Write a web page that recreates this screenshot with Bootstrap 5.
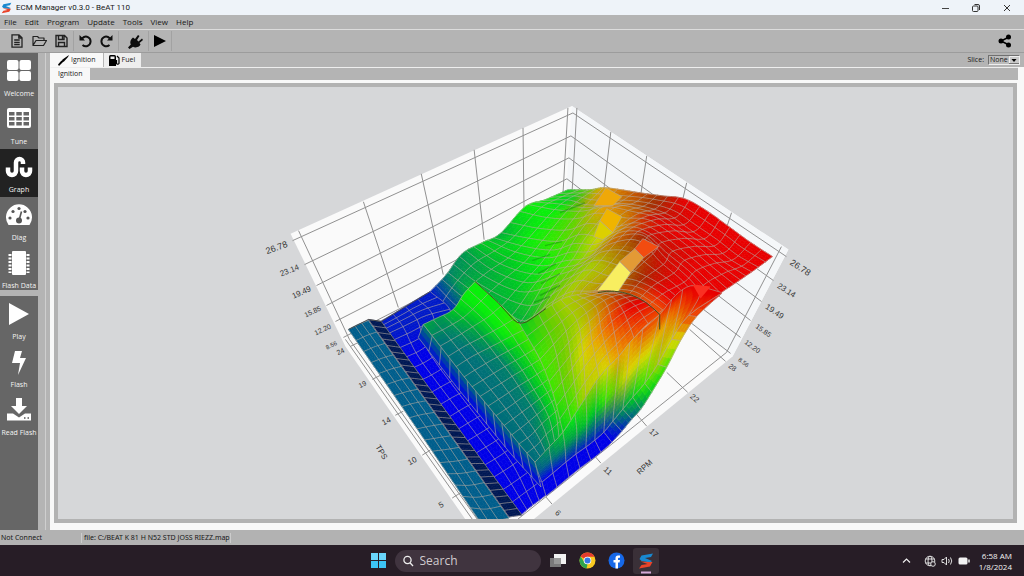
<!DOCTYPE html>
<html lang="en">
<head>
<meta charset="utf-8">
<meta name="viewport" content="width=device-width, initial-scale=1">
<title>ECM Manager v0.3.0 - BeAT 110</title>
<link rel="stylesheet" href="https://cdn.jsdelivr.net/npm/bootstrap@5.3.0/dist/css/bootstrap.min.css">
<style>
body{font-family:"Open Sans","Noto Sans",sans-serif;font-size:7px;line-height:10px;color:#181818;background:#b4b4b4}
button,input,select{font:inherit;color:inherit;border:0;background:none;padding:0;border-radius:0}
a{color:inherit;text-decoration:none}
svg{display:block;flex:none}
.titlebar{height:15px;background:#eef3f9;font-size:9px;padding:0 12px 0 1px}
.titlebar .caption-text{font-family:Roboto,"Open Sans",sans-serif;font-size:8px}
.win-ctl{gap:21px}
.menubar{height:15px;border-bottom:1px solid #dcdcdc;gap:8px;padding:0 4px;font-size:8px}
.toolbar{height:23px;border-bottom:1px solid #9c9c9c;padding:0 8px 0 10px}
.tool-group{gap:8px;padding-right:5px;margin-right:5px;border-right:1px solid #a2a2a2;height:20px}
.side{width:46px;border-right:1px solid #cfcfcf}
.side-list{width:38px;background:#666;color:#f4f4f4}
.side-list button{display:flex;flex-direction:column;align-items:center;justify-content:space-between;width:100%;height:48px;padding:6px 0 3px;font-size:7px;line-height:9px;white-space:nowrap}
.side-list button.active{background:#222}
.side-list.upper{height:237px}
.side-list.lower{margin-top:6px}
.work{background:#f8f8f8;margin-left:4px;min-width:0}
.tab-strip{background:#b4b4b4;height:14px;border-left:1px solid #f8f8f8}
.tab-strip.second{height:13px;border-top:1px solid #eee;margin-right:6px}
.tab-strip button{background:#f8f8f8;padding:0 7px;height:100%;display:flex;align-items:center;gap:2px}
.tab-strip button.dim{background:#eee;margin-left:1px;padding:0 6px 0 5px}
.slice-box{border:1px solid #707070;border-right-color:#eee;border-bottom-color:#eee;background:#bcbcbc;height:10px;width:32px}
.slice-box select{appearance:none;width:100%;height:8px;padding-left:1px;font-size:7px;line-height:8px;display:block}
.slice-box svg{right:0;top:0;pointer-events:none}
.plot-frame{margin:3px 7px 7px 4px;border:4px solid #b2b2b2;background:#d6d7d9;min-height:0}
.plot-frame svg{width:100%;height:100%}
.plot-frame text{font-family:"Liberation Sans",sans-serif;fill:#333;text-anchor:middle;dominant-baseline:central}
.status{height:15px;background:#b2b2b2;font-family:"Noto Sans",sans-serif;padding-left:1px}
.status .state{width:80px}
.status .file{border-left:1px solid #ccc;border-right:1px solid #ccc;padding-left:2px;white-space:nowrap}
.taskbar{height:31px;background:#271d26;color:#f3f3f3;padding-left:4px}
.search-pill{width:146px;height:22px;border-radius:11px;background:#40343f;padding-left:8px;gap:6px}
.search-pill input{width:110px;font-size:12px;line-height:18px;color:#ddd;outline:0}
.search-pill input::placeholder{color:#d0cbd0;opacity:1}
.app-open{width:26px;height:26px;border-radius:3px;background:#3a3038}
.tray{right:12px;gap:5px}
.clock{font-size:8px;line-height:11px}
</style>
</head>
<body class="d-flex flex-column vh-100 overflow-hidden">
<svg width="0" height="0" class="position-absolute" aria-hidden="true">
  <defs>
    <symbol id="brand" viewBox="0 0 16 16"><path fill="#1989d0" d="M1.500 6 3.500 2.500 15 .5 13 4 7 5l7 3-2 1.500L3.500 8z"/><path fill="#e9432a" d="M14.500 9 12 13.500 1 15.500 3.500 12l6-1L2.500 8.500l9 .5z"/></symbol>
  </defs>
</svg>

<header class="titlebar d-flex align-items-center flex-shrink-0">
  <svg width="11" height="12" class="me-1"><use href="#brand"/></svg>
  <span class="caption-text">ECM Manager v0.3.0 - BeAT 110</span>
  <div class="win-ctl d-flex ms-auto align-items-center">
    <button aria-label="Minimise"><svg width="10" height="10"><path d="M2 5.500h7" stroke="#444"/></svg></button>
    <button aria-label="Restore"><svg width="10" height="10" fill="none" stroke="#333"><rect x="1.500" y="3" width="5.500" height="5.500" rx="1"/><path d="M3.500 1.500H7q1.500 0 1.500 1.500v4"/></svg></button>
    <button aria-label="Close"><svg width="10" height="10" stroke="#333"><path d="M2 2l6 6M8 2l-6 6"/></svg></button>
  </div>
</header>

<nav class="menubar d-flex align-items-center flex-shrink-0">
  <a href="#">File</a><a href="#">Edit</a><a href="#">Program</a><a href="#">Update</a><a href="#">Tools</a><a href="#">View</a><a href="#">Help</a>
</nav>

<div class="toolbar d-flex align-items-center flex-shrink-0">
  <div class="tool-group d-flex align-items-center">
    <button aria-label="New"><svg width="14" height="14" fill="none" stroke="#222" stroke-width="1.300"><path d="M2 .8h7l3 3v9.400H2zM8.800.8V4H12M4.200 6h5.500M4.200 8.300h5.500M4.200 10.500h5.500"/></svg></button>
    <button aria-label="Open"><svg width="15" height="14" fill="none" stroke="#222" stroke-width="1.200" stroke-linejoin="round"><path d="M1 11.500V2.500h4.500l1.500 1.500h5v2.500M1 11.500 4 6.500h10.500l-3 5z"/></svg></button>
    <button aria-label="Save"><svg width="13" height="14" fill="none" stroke="#222" stroke-width="1.400"><path d="M1 1.500h8.500l2.500 2.500v8.500H1zM3.500 1.500v4h5.500v-4M3.500 12.500V8.500h6v4"/><path d="M7.500 2v3"/></svg></button>
  </div>
  <div class="tool-group d-flex align-items-center">
    <button aria-label="Undo"><svg width="13" height="14" fill="none" stroke="#111" stroke-width="2"><path d="M3 4.500C7 .5 12 3.500 11.500 8c-.5 4-5 5.500-8 3"/><path d="M.5 1v5.500H6z" fill="#111" stroke="none"/></svg></button>
    <button aria-label="Redo"><svg width="13" height="14" fill="none" stroke="#111" stroke-width="2"><path d="M10 4.500C6 .5 1 3.500 1.500 8c.5 4 5 5.500 8 3"/><path d="M12.500 1v5.500H7z" fill="#111" stroke="none"/></svg></button>
  </div>
  <div class="tool-group d-flex align-items-center ps-1">
    <button aria-label="Connect"><svg width="15" height="15" fill="#0c0c0c"><path d="M3.500 5 5 3.500l2 1.500L10 1l1.500 1-2.500 4 1.500 1.500L14 4.500l1 1.500-3.500 3 1 1.500-1 1.500c-3 2-5 1.500-6.500.8L1.500 15 0 13.500l2.800-3C2 9 2 7 3.500 5z"/></svg></button>
  </div>
  <div class="tool-group d-flex align-items-center">
    <button aria-label="Run"><svg width="12" height="14"><path d="M0 1v12l12-6z"/></svg></button>
  </div>
  <button aria-label="Share" class="ms-auto me-1"><svg width="14" height="14"><path d="M11 3 3 7l8 4" fill="none" stroke="#000" stroke-width="1.500"/><circle cx="10.500" cy="3" r="2.500"/><circle cx="3" cy="7" r="2.500"/><circle cx="10.500" cy="11" r="2.500"/></svg></button>
</div>

<main class="d-flex flex-grow-1" style="min-height:0">
  <aside class="side d-flex flex-column flex-shrink-0">
    <div class="side-list upper flex-shrink-0 overflow-hidden">
      <button><svg width="26" height="24" fill="#fff"><rect x="1" y="1" width="11.500" height="10" rx="2"/><rect x="13.500" y="1" width="11.500" height="10" rx="2"/><rect x="1" y="12" width="11.500" height="10" rx="2"/><rect x="13.500" y="12" width="11.500" height="10" rx="2"/></svg>Welcome</button>
      <button><svg width="26" height="24"><rect x="1" y="1" width="24" height="20" rx="2" fill="#fff"/><g fill="#666"><path d="M3 5h5.500v3.500H3zM10.300 5h5.500v3.500h-5.500zM17.500 5H23v3.500h-5.500zM3 10h5.500v3.500H3zM10.300 10h5.500v3.500h-5.500zM17.500 10H23v3.500h-5.500zM3 15h5.500v3.500H3zM10.300 15h5.500v3.500h-5.500zM17.500 15H23v3.500h-5.500z"/></g></svg>Tune</button>
      <button class="active"><svg width="28" height="25" fill="none" stroke="#fff" stroke-width="4.500"><path d="M3 12.500v3.500a4 4 0 0 0 8 0V7.500a3.500 3.500 0 0 1 7 0v1.500M17 12.500v3.500a4 4 0 0 0 8 0v-3.500"/></svg>Graph</button>
      <button><svg width="28" height="24"><path d="M3.500 22A13 13 0 1 1 24.500 22z" fill="#fff"/><g fill="#555"><circle cx="5" cy="15" r="1.600"/><circle cx="8" cy="8.500" r="1.600"/><circle cx="14" cy="5.500" r="1.600"/><circle cx="20" cy="8.500" r="1.600"/><circle cx="23" cy="15" r="1.600"/><circle cx="14" cy="17.500" r="3"/></g><path d="M14 17.500l2.500-9" stroke="#555" stroke-width="1.600"/></svg>Diag</button>
      <button><svg width="26" height="26"><rect x="6" y="0" width="14" height="24" rx="1" fill="#fff"/><path d="M4 3v19M22 3v19" stroke="#fff" stroke-width="3" stroke-dasharray="2 1.500"/></svg>Flash Data</button>
    </div>
    <div class="side-list lower flex-grow-1">
      <button><svg width="26" height="24"><path d="M3 1v22l20-11z" fill="#fff"/></svg>Play</button>
      <button><svg width="26" height="26"><path d="M9 1h7l-2 7h6L12 25l2-12H6z" fill="#fff"/></svg>Flash</button>
      <button><svg width="26" height="26" fill="#fff"><path d="M10 0h6v8h5l-8 8-8-8h5zM1 15.500h6l6 4 6-4h6v7H1z"/><path d="M18 20h1.500M21.500 20H23" stroke="#555" stroke-width="1.500"/></svg>Read Flash</button>
    </div>
  </aside>

  <section class="work d-flex flex-column flex-grow-1">
    <div class="tab-strip d-flex align-items-center flex-shrink-0">
      <button><svg width="11" height="11"><path d="M11 0 4.500 4.500 3 8l3-1.500L10 2zM3.500 5.500 0 9.500 1 11l4-4z"/></svg>Ignition</button>
      <button class="dim"><svg width="11" height="11"><path d="M0 11V1.500Q0 0 1.500 0h4Q7 0 7 1.500V11z"/><path d="M1.500 1.500h4V4h-4z" fill="#eee"/><path d="M7.500 5v3.500q1.500 1.500 2.500 0V3L8 1" fill="none" stroke="#000" stroke-width="1.200"/></svg>Fuel</button>
      <label for="slice" class="ms-auto me-1">Slice:</label>
      <div class="slice-box position-relative me-1"><select id="slice"><option>None</option></select><svg class="position-absolute" width="10" height="8"><path d="M0 0h10v8H0z" fill="#c9c9c9"/><path d="M.5 8V.5H10" fill="none" stroke="#eee"/><path d="M2.500 3h5l-2.500 3z"/><path d="M0 7.500h10" stroke="#777"/></svg></div>
    </div>
    <div class="tab-strip second d-flex flex-shrink-0"><button>Ignition</button></div>
    <div class="plot-frame flex-grow-1 overflow-hidden">
      <svg id="plot" viewBox="58 87 955 433" role="img" aria-label="Ignition map over RPM and TPS">
        <path d="M290 234 572 106 789 250 733 357 534 520H465L345 347z" fill="#fafafa"/>
        <path d="M572 106 789 250 733 357 564 225z" fill="#f5f7f9"/>
        <g id="axes" fill="none" stroke="#909090" stroke-width="1"></g>
        <g id="surface"></g>
        <g id="labels"></g>
      </svg>
    </div>
  </section>
</main>

<footer class="status d-flex align-items-center flex-shrink-0">
  <span class="state">Not Connect</span><span class="file">file: C:/BEAT K 81 H N52 STD JOSS RIEZZ.map</span>
</footer>

<div class="taskbar d-flex align-items-center justify-content-center flex-shrink-0 position-relative">
  <div class="d-flex align-items-center gap-2">
    <button aria-label="Start"><svg width="17" height="17" fill="#3cc4f5"><path d="M1 1h7v7H1zM9 1h7v7H9z" fill="#69d6fb"/><path d="M1 9h7v7H1zM9 9h7v7H9z"/></svg></button>
    <div class="search-pill d-flex align-items-center"><svg width="11" height="12" fill="none" stroke="#eee" stroke-width="1.300"><circle cx="4.500" cy="5" r="3.600"/><path d="M7 7.800 10 11"/></svg><input type="text" placeholder="Search" aria-label="Search"></div>
    <button aria-label="Task view"><svg width="18" height="16"><path d="M5 1h12v10H5z" fill="#f2f2f2"/><path d="M1 5h11v9H1z" fill="#888" fill-opacity=".85"/></svg></button>
    <button aria-label="Browser" class="ms-1"><svg width="17" height="17"><circle cx="8.500" cy="8.500" r="8" fill="#f9c922"/><path d="M8.500 8.500 1.600 4.500A8 8 0 0 1 15.500 4.700H8.500z" fill="#e33b2e"/><path d="M1.600 4.500 6 11l2.500 1.500L7.500 16.500A8 8 0 0 1 1.600 4.500z" fill="#2ea44f"/><circle cx="8.500" cy="8.500" r="3.800" fill="#fff"/><circle cx="8.500" cy="8.500" r="3" fill="#3578e5"/></svg></button>
    <button aria-label="Facebook" class="ms-1"><svg width="17" height="17"><circle cx="8.500" cy="8.500" r="8" fill="#1668e8"/><path d="M7.500 16.500V10.500h-2V8h2V6.300Q7.500 3.500 10 3.500h2v2.200h-1.200Q10 5.700 10 6.500V8h2l-.4 2.500H10v6z" fill="#fff"/></svg></button>
    <button aria-label="ECM Manager" class="app-open d-flex flex-column align-items-center justify-content-end"><svg width="16" height="22"><use href="#brand" width="16" height="16" y="1"/><path d="M3 20.500h10" stroke="#d5a9d8" stroke-width="2"/></svg></button>
  </div>
  <div class="tray position-absolute d-flex align-items-center">
    <svg width="9" height="9" class="me-2" fill="none" stroke="#eee" stroke-width="1.200"><path d="M1 6.500 4.500 3 8 6.500"/></svg>
    <svg width="12" height="12" fill="none" stroke="#ddd"><circle cx="6" cy="6" r="4.800"/><ellipse cx="6" cy="6" rx="2" ry="4.800"/><path d="M1.500 4h9M1.500 8H7"/><circle cx="9" cy="9" r="2.300" fill="#271d26"/></svg>
    <svg width="12" height="12" fill="none" stroke="#ddd"><path d="M1 4.500h2L5.500 2v8L3 7.500H1zM7.500 4q1.500 2 0 4M9.500 2.500q2.500 3.500 0 7"/></svg>
    <svg width="12" height="12"><rect x=".5" y="2.500" width="9" height="7" rx="1.500" fill="#f3f3f3"/><path d="M11 4.500v3" stroke="#eee" stroke-width="1.500"/></svg>
    <div class="clock text-end ms-1">6:58 AM<br>1/8/2024</div>
  </div>
</div>

<script src="https://cdn.jsdelivr.net/npm/bootstrap@5.3.0/dist/js/bootstrap.bundle.min.js"></script>
<script>
// Colour scale of the map, from retarded (blue) to advanced (red)
const C = {
  S:[0,94,140], K:[0,24,84], b:[0,26,200], B:[0,0,232], T:[0,112,120], t:[0,128,105], e:[0,150,80],
  d:[0,172,60], g:[0,205,30], G:[10,240,10], l:[60,232,0], m:[110,205,0], y:[165,205,0], Y:[215,215,0],
  k:[185,165,0], O:[235,160,0], o:[200,110,0], p:[190,70,0], q:[160,45,0], r:[238,75,0], R:[232,0,0], D:[205,12,0], n:[0,90,140]
};
// Each patch is a net of control points: "x,y,colour key"
const patches = [
 {rows:19, cols:19, net:[
  '568,190,g 590,190,m 606,188,O 640,193,p 662,196,q 685,199,R 707,211,R 728,226,R 750,242,R 773,257,R',
  '545,200,G 570,199,g 590,204,k 624,203,o 650,207,q 672,215,D 692,229,R 714,244,R 733,259,R 754,271,R',
  '525,207,G 553,213,G 580,214,m 603,209,O 630,214,o 652,218,D 670,229,R 692,245,R 713,263,R 738,282,R',
  '500,234,d 529,240,G 558,243,l 580,236,m 602,238,Y 628,228,o 648,233,D 670,250,D 695,270,R 720,294,R',
  '482,243,g 511,258,g 543,265,G 566,260,l 588,257,y 612,243,o 640,240,q 662,262,D 684,281,R 704,304,R',
  '462,254,e 488,274,d 522,288,g 548,283,l 570,275,m 592,266,y 612,272,k 640,279,q 664,292,R 688,312,R',
  '446,275,t 468,292,d 500,312,d 522,325,d 546,309,m 568,296,y 588,294,k 628,292,p 650,303,r 672,320,r',
  '430,292,b 452,317,b 470,328,d 495,345,d 530,350,g 560,330,y 590,320,Y 618,305,r 638,314,r 656,328,r']},
 {rows:19, cols:4, net:[
  '380,322,b 397,312,b 413,302,b 430,292,b',
  '389,335,b 408,326,b 427,317,b 450,311,b',
  '408,361,B 421,355,B 434,346,B 448,339,B',
  '436,399,B 448,392,B 461,385,B 474,377,B',
  '464,438,B 477,430,B 490,422,B 503,414,B',
  '492,476,B 505,468,B 518,459,B 531,450,B',
  '521,516,B 529,509,B 537,503,B 546,496,B']},
 {rows:17, cols:3, net:['348,330,S 358,325,S 368,321,S','413,424,S 426,421,S 438,419,S','478,520,S 493,522,S 509,519,S']},
 {rows:30, cols:1, net:['368,320,K 381,322,K','438,418,K 451,419,K','509,518,K 522,516,K']},
 {rows:13, cols:1, net:['423,325,t 418,338,b','452,362,T 452,382,B','480,397,T 482,419,B','508,431,T 512,456,B','535,463,T 541,488,B']},
 {rows:14, cols:6, net:[
  '423,325,d 438,318,e 453,310,g 464,294,G 475,282,G',
  '438,344,T 454,335,t 470,325,d 486,314,G 498,303,G',
  '452,362,T 468,352,T 486,343,e 503,334,G 520,325,l',
  '466,380,T 482,370,T 499,360,t 515,351,g 530,342,l',
  '480,397,T 496,387,T 512,377,t 527,368,g 540,360,l',
  '494,414,T 509,404,T 523,394,t 537,385,g 549,376,l',
  '508,431,T 521,421,T 534,411,t 546,401,g 557,392,l',
  '521,447,T 533,438,T 543,427,e 553,418,g 562,410,l',
  '535,463,T 543,455,T 550,447,e 557,440,d 563,433,g']},
 {rows:9, cols:9, net:[
  '520,325,g 546,309,m 561,300,y 573,296,y 585,294,k 596,292,o 606,291,p',
  '540,360,l 560,338,m 577,321,y 591,310,k 604,301,o 616,296,p 628,294,q',
  '553,394,l 567,376,m 583,354,Y 597,338,O 612,322,r 630,309,R 646,302,R',
  '563,433,g 575,415,l 586,398,y 606,370,Y 619,357,O 642,330,r 660,315,r']},
 {rows:1, sub:12, cols:14, net:[
  '535,463,T 549,448,e 563,433,g 575,415,G 586,398,m 597,381,y 608,368,Y 619,357,O 630,343,O 643,330,r 660,315,r 672,300,R 683,290,R 696,286,R 722,293,R',
  '538,473,n 551,461,T 565,447,e 577,434,d 587,422,g 596,410,g 606,400,l 616,389,m 627,376,Y 639,362,Y 652,350,Y 666,325,O 680,307,r 700,296,R 721,294,R',
  '542,483,B 553,474,B 566,463,b 576,455,b 586,448,b 595,441,b 604,433,b 613,422,n 623,410,e 633,398,g 645,384,l 658,365,y 672,340,Y 689,316,r 720,295,R']},
 {rows:1, cols:14, net:[
  '542,483,B 553,474,B 566,463,B 576,455,B 586,448,B 595,441,B 604,433,B 613,422,n 623,410,e 633,398,g 645,384,l 658,365,y 672,340,Y 689,316,r 720,295,R',
  '546,497,B 557,488,B 569,478,B 580,469,B 591,461,B 601,453,B 612,443,B 622,432,b 632,420,n 641,410,t 652,393,g 667,368,l 681,341,Y 697,317,r 722,294,R']}
];
const spline = (a,b,c,d,t) => .5*(2*b+(c-a)*t+(2*a-5*b+4*c-d)*t*t+(3*b-a-3*c+d)*t*t*t);
function along(list, t) {
  const n = list.length-1, p = Math.min(t*n, n-1e-9), i = Math.floor(p), f = p-i;
  const B = list[i], Cc = list[i+1];
  const A = list[i-1] || B.map((v,k)=>2*v-Cc[k]), D = list[i+2] || Cc.map((v,k)=>2*v-B[k]);
  return B.map((v,k) => k<2 ? spline(A[k],v,Cc[k],D[k],f) : v+(Cc[k]-v)*f);
}
const SUB = 3;
let out = '';
patches.forEach(p => {
  const net = p.net.map(r => r.split(' ').map(s => { const q = s.split(','); return [+q[0], +q[1], ...C[q[2]]]; }));
  const rowSub = p.sub || SUB, nr = p.rows*rowSub, nc = p.cols*SUB, pts = [];
  for (let i=0;i<=nr;i++) { const row = net[0].map((_,j) => along(net.map(r=>r[j]), i/nr));
    pts.push(Array.from({length:nc+1}, (_,j) => along(row, j/nc))); }
  const xy = q => q[0].toFixed(1)+' '+q[1].toFixed(1);
  for (let i=0;i<nr;i++) for (let j=0;j<nc;j++) {
    const a=pts[i][j], b=pts[i][j+1], c=pts[i+1][j+1], d=pts[i+1][j];
    const col = 'rgb('+[2,3,4].map(k => Math.round((a[k]+b[k]+c[k]+d[k])/4)).join()+')';
    out += `<path fill="${col}" stroke="${col}" stroke-width=".7" d="M${xy(a)}L${xy(b)}L${xy(c)}L${xy(d)}z"/>`;
  }
  let lines = '';
  for (let i=0;i<=nr;i+=rowSub) lines += 'M'+pts[i].map(xy).join('L');
  for (let j=0;j<=nc;j+=SUB) lines += 'M'+pts.map(r=>xy(r[j])).join('L');
  out += `<path fill="none" stroke="#b4aaa0" stroke-opacity=".75" stroke-width=".8" d="${lines}"/>`;
  // bright facets and folds that sit on the rear part, before the front part covers them
  if (p === patches[0]) out += `<g stroke="#b4aaa0" stroke-width=".6"><path fill="#f8ee60" d="M620 262 631 273 617 294 596 293z"/><path fill="#e39a35" d="M620 262 635 249 644 258 631 273z"/><path fill="#f24c10" d="M643 239 659 247 644 258 635 249z"/><path fill="#efa808" d="M606 188 622 197 613 206 594 206z"/><path fill="#efb400" d="M607 209 622 217 613 233 600 221z"/><path fill="#dcd000" d="M600 221 613 233 603 240 594 237z"/></g><path d="M538 274 556 264M541 284 560 274M532 261 550 255M540 296 560 286M560 213 585 203M545 246 562 242M534 303 550 297" fill="none" stroke="#087a10" stroke-width="1.500" stroke-opacity=".4"/>`;
});
out += '<path fill="#fa3022" d="M693 285 711 287 701 299z"/><path fill="none" stroke="#40501c" stroke-width="1" d="M475 282 498 303 513 320Q521 328 532 319L546 309M598 293Q632 286 660 315V330"/><path fill="none" stroke="#444" stroke-width=".9" d="M348 330 368 320 381 322 430 292"/>';
document.getElementById('surface').innerHTML = out;

// Wall and floor grid: x1,y1,x2,y2
const walls = [[298,231,349,340],[349,340,477,520],[363,202,398,308],[421,174,443,275],[474,150,484,240],[523,128,524,210],[568,108,563,195],[577,108,572,195],[611,132,604,190],[647,156,641,195],[687,183,683,200],[732,213,727,228],[782,247,727,353],[727,353,722,357],[722,357,518,520],[345,340,472,520],
 [292,241,573,113],[304,265,571,136],[316,286,569,158],[326,306,567,179],[335,322,565,205],[343,338,564,225],[573,113,787,257],[571,136,774,281],[569,158,762,302],[567,179,751,321],[565,205,741,338],[564,225,731,354],
 [667,373,688,393],[635,413,647,427],[595,457,601,464],[546,498,552,505],[690,330,726,362],[350,347,358,343],[372,380,380,376],[395,416,403,412],[422,456,430,451],[452,499,460,494]];
document.getElementById('axes').innerHTML = '<path d="'+walls.map(w=>`M${w[0]} ${w[1]}L${w[2]} ${w[3]}`).join('')+'"/>';

// Tick labels: text, x, y, angle, size
const labels = [['26.78',276,248,-20,9],['23.14',289,271,-22,8],['19.49',301,293,-24,8],['15.85',312,312,-25,7],['12.20',322,330,-25,7],['8.56',331,346,-26,6],['24',340,352,-26,7],['19',362,385,-26,7],['14',386,422,-27,8],['10',412,462,-28,8],['5',441,506,-30,8],['TPS',381,453,60,8],
 ['26.78',801,268,33,9],['23.14',787,291,33,8],['19.49',775,312,34,8],['15.85',764,331,35,7],['12.20',753,347,36,7],['8.56',744,363,37,6],['28',733,368,38,7],['22',695,399,40,8],['17',654,434,42,8],['11',608,472,43,8],['6',558,514,44,8],['RPM',645,468,-42,8]];
document.getElementById('labels').innerHTML = labels.map(l=>`<text x="${l[1]}" y="${l[2]}" font-size="${l[4]}" transform="rotate(${l[3]} ${l[1]} ${l[2]})">${l[0]}</text>`).join('');
</script>
</body>
</html>
